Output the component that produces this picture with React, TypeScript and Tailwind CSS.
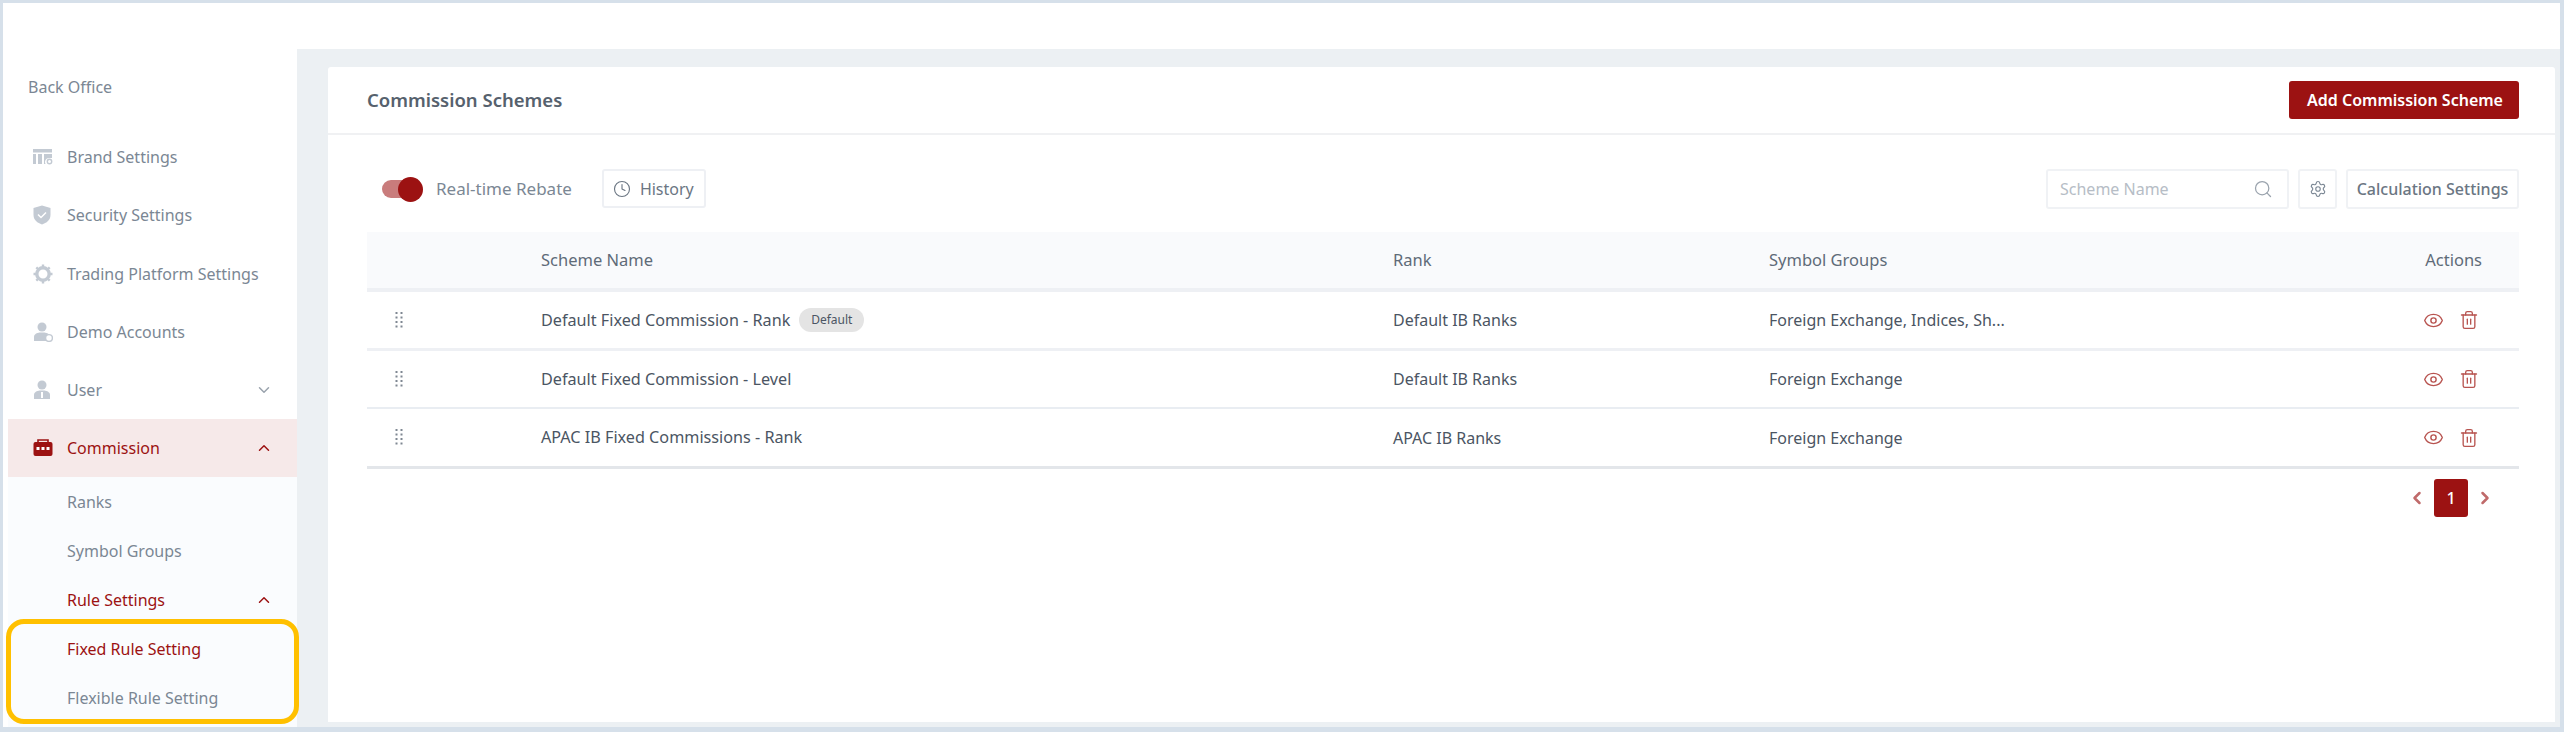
import { ChevronDown, ChevronLeft, ChevronRight, ChevronUp, Clock, Eye, Search, Settings, Trash2 } from "lucide-react";

const BrandIcon = () => (
  <svg width="20" height="16" viewBox="0 0 20 16" fill="#c3cad3">
    <rect x="0" y="0" width="19" height="3.5" />
    <rect x="0" y="5" width="3" height="10" />
    <rect x="5" y="5" width="4" height="10" />
    <path d="M11 5h8v4h-3a4 4 0 0 0-3.5 6H11z" />
    <circle cx="16.5" cy="12.5" r="2.2" fill="none" stroke="#c3cad3" strokeWidth="1.4" />
  </svg>
);

const ShieldIcon = () => (
  <svg width="18" height="20" viewBox="0 0 18 20">
    <path d="M9 0.5 L17.5 3 V10 C17.5 15 13.5 18 9 19.5 C4.5 18 0.5 15 0.5 10 V3 Z" fill="#c3cad3" />
    <path d="M5 9.5 L8 12.5 L13 7.5" fill="none" stroke="#fff" strokeWidth="1.5" />
  </svg>
);

const GearIcon = () => (
  <svg width="20" height="20" viewBox="0 0 20 20" fill="none" stroke="#c3cad3">
    <circle cx="10" cy="10" r="6.2" strokeWidth="3.4" />
    <path d="M10 0.5V3M10 17V19.5M0.5 10H3M17 10H19.5M3.3 3.3L5 5M15 15L16.7 16.7M16.7 3.3L15 5M5 15L3.3 16.7" strokeWidth="2.4" />
  </svg>
);

const PersonIcon = ({ gear }: { gear?: boolean }) => (
  <svg width="20" height="20" viewBox="0 0 20 20" fill="#c3cad3">
    <circle cx="9" cy="5" r="4.5" />
    <path d="M1 19 V15 C1 12 4 11 6.5 10.5 H11.5 C14 11 17 12 17 15 V19 Z" />
    {gear && <circle cx="16" cy="16" r="3.4" fill="#fff" stroke="#c3cad3" strokeWidth="1.4" />}
    {!gear && <rect x="8" y="12" width="2" height="6" fill="#fff" />}
  </svg>
);

const CommissionIcon = () => (
  <svg width="20" height="18" viewBox="0 0 20 18">
    <path d="M5 3 V1 H15 V3" fill="none" stroke="#9c1212" strokeWidth="1.6" />
    <rect x="0.5" y="3" width="19" height="14" rx="2" fill="#9c1212" />
    <rect x="3.5" y="8" width="3" height="3" fill="#fff" />
    <rect x="8.5" y="8" width="3" height="3" fill="#fff" />
    <rect x="13.5" y="8" width="3" height="3" fill="#fff" />
  </svg>
);

const DragHandle = () => (
  <svg width="9" height="17" viewBox="0 0 9 17" fill="#7f8792">
    {[0, 4.5, 9, 13.5].map((y) => (
      <g key={y}>
        <rect x="0.5" y={y} width="2" height="2" />
        <rect x="5.5" y={y} width="2" height="2" />
      </g>
    ))}
  </svg>
);

const menuItems = [
  { label: "Brand Settings", icon: <BrandIcon /> },
  { label: "Security Settings", icon: <ShieldIcon /> },
  { label: "Trading Platform Settings", icon: <GearIcon /> },
  { label: "Demo Accounts", icon: <PersonIcon gear /> },
];

const rows = [
  { name: "Default Fixed Commission - Rank", isDefault: true, rank: "Default IB Ranks", groups: "Foreign Exchange, Indices, Sh...", border: "border-b-[3px] border-[#eef0f4]", height: "h-[59px]" },
  { name: "Default Fixed Commission - Level", isDefault: false, rank: "Default IB Ranks", groups: "Foreign Exchange", border: "border-b-2 border-[#e9edf2]", height: "h-[58px]" },
  { name: "APAC IB Fixed Commissions - Rank", isDefault: false, rank: "APAC IB Ranks", groups: "Foreign Exchange", border: "border-b-[3px] border-[#e3e6ea]", height: "h-[60px]" },
];

export default function App() {
  return (
    <div className="relative h-[732px] w-full overflow-hidden bg-[#d6e0ea] pt-[3px] pl-[3px] pr-[4px] pb-[5px] font-['Noto_Sans',sans-serif]">
      <div className="flex h-full bg-white">
        {/* sidebar */}
        <aside className="w-[294px] shrink-0 flex flex-col">
          <div className="pl-[25px] pt-[73px] h-[125px] text-[16px] leading-[22px] text-[#7b8794]">Back Office</div>
          <div className="flex flex-col">
            {menuItems.map((item) => (
              <div key={item.label} className="flex h-[58.25px] items-center pl-[30px] text-[16px] text-[#7b8794]">
                <span className="flex w-[34px] items-center">{item.icon}</span>
                {item.label}
              </div>
            ))}
            <div className="flex h-[58px] items-center pl-[30px] pr-[24px] text-[16px] text-[#7b8794]">
              <span className="flex w-[34px] items-center"><PersonIcon /></span>
              <span className="flex-1">User</span>
              <ChevronDown size={18} color="#9aa3ad" />
            </div>
          </div>
          <div className="ml-[5px] flex h-[58px] shrink-0 items-center bg-[#f6e9e9] pl-[25px] pr-[24px] text-[16px] text-[#9c1212]">
            <span className="flex w-[34px] items-center"><CommissionIcon /></span>
            <span className="flex-1">Commission</span>
            <ChevronUp size={18} color="#9c1212" />
          </div>
          <div className="ml-[5px] flex flex-1 flex-col bg-[#fafcfe] pl-[59px] pr-[24px] text-[16px] text-[#7b8794]">
            <div className="flex h-[49px] items-center">Ranks</div>
            <div className="flex h-[49px] items-center">Symbol Groups</div>
            <div className="flex h-[49px] items-center justify-between text-[#9c1212]">
              Rule Settings
              <ChevronUp size={18} color="#9c1212" />
            </div>
            <div className="flex h-[49px] items-center text-[#9c1212]">Fixed Rule Setting</div>
            <div className="flex h-[49px] items-center">Flexible Rule Setting</div>
          </div>
        </aside>

        {/* main */}
        <main className="mt-[46px] flex min-w-0 flex-1 flex-col bg-[#ecf0f3] pl-[31px] pr-[5px] pt-[18px] pb-[5px]">
          <div className="flex h-full flex-col rounded-t-[3px] bg-white">
            <div className="flex h-[68px] shrink-0 items-center justify-between border-b-2 border-[#f0f1f3] pl-[39px] pr-[36px]">
              <h1 className="text-[18.5px] font-semibold text-[#56616d]">Commission Schemes</h1>
              <button className="flex h-[38px] w-[230px] items-center justify-center rounded-[3px] bg-[#9c1212] pl-[2px] text-[16px] font-semibold text-white">
                Add Commission Scheme
              </button>
            </div>

            <div className="pl-[39px] pr-[36px]">
              <div className="flex h-[97px] items-start justify-between pt-[34px]">
                <div className="flex items-center">
                  <div className="relative ml-[15px] h-[18px] w-[36px] rounded-full bg-[#c97c7c]">
                    <span className="absolute -top-[3px] -right-[5px] h-[25px] w-[25px] rounded-full bg-[#9c1212]" />
                  </div>
                  <span className="ml-[18px] text-[17px] text-[#7b8794]">Real-time Rebate</span>
                  <button className="ml-[30px] flex h-[39px] w-[104px] items-center gap-[9px] rounded-[3px] border-2 border-[#eef0f4] pl-[9px] text-[16px] text-[#6b7683]">
                    <Clock size={18} strokeWidth={1.5} />
                    History
                  </button>
                </div>
                <div className="flex h-[40px] items-center gap-[9px]">
                  <div className="flex h-full w-[243px] items-center justify-between rounded-[3px] border-2 border-[#f0f2f5] pl-[12px] pr-[14px] text-[16px] text-[#b6bdc6]">
                    Scheme Name
                    <Search size={20} color="#9aa3ad" strokeWidth={1.5} />
                  </div>
                  <div className="flex h-full w-[39px] items-center justify-center rounded-[3px] border-2 border-[#f0f2f5]">
                    <Settings size={18} color="#7b8794" strokeWidth={1.5} />
                  </div>
                  <div className="flex h-full w-[173px] items-center justify-center rounded-[3px] border-2 border-[#f0f2f5] text-[16px] font-medium text-[#6b7683]">
                    Calculation Settings
                  </div>
                </div>
              </div>

              <div className="flex h-[60px] items-center border-b-4 border-[#eef0f4] bg-[#f9fafc] text-[16.5px] text-[#5f6b78]">
                <div className="w-[174px] shrink-0" />
                <div className="w-[852px] shrink-0">Scheme Name</div>
                <div className="w-[376px] shrink-0">Rank</div>
                <div className="flex-1">Symbol Groups</div>
                <div className="pr-[37px]">Actions</div>
              </div>

              {rows.map((row) => (
                <div key={row.name} className={`flex items-center text-[16px] text-[#4b5563] ${row.height} ${row.border}`}>
                  <div className="flex w-[174px] shrink-0 pl-[28px]"><DragHandle /></div>
                  <div className="flex w-[852px] shrink-0 items-center gap-[9px] text-[16.2px]">
                    {row.name}
                    {row.isDefault && (
                      <span className="flex h-[24px] w-[65px] items-center justify-center rounded-full bg-[#e4e4e4] text-[12px] text-[#4b5563]">Default</span>
                    )}
                  </div>
                  <div className="w-[376px] shrink-0">{row.rank}</div>
                  <div className="flex-1">{row.groups}</div>
                  <div className="flex items-center gap-[15px] pr-[40px]">
                    <Eye size={21} color="#b85450" strokeWidth={1.6} />
                    <Trash2 size={20} color="#b85450" strokeWidth={1.6} />
                  </div>
                </div>
              ))}

              <div className="mt-[10px] flex items-center justify-end pr-[24px]">
                <ChevronLeft size={20} color="#c06a6a" strokeWidth={3} />
                <span className="mx-[7px] flex h-[38px] w-[34px] items-center justify-center rounded-[3px] bg-[#9c1212] text-[16px] font-medium text-white">1</span>
                <ChevronRight size={20} color="#c06a6a" strokeWidth={3} />
              </div>
            </div>
          </div>
        </main>
      </div>

      {/* highlight round the new menu items */}
      <div className="pointer-events-none absolute left-[6px] top-[619px] h-[105px] w-[293px] rounded-[18px] border-[5px] border-[#ffc000]" />
    </div>
  );
}
